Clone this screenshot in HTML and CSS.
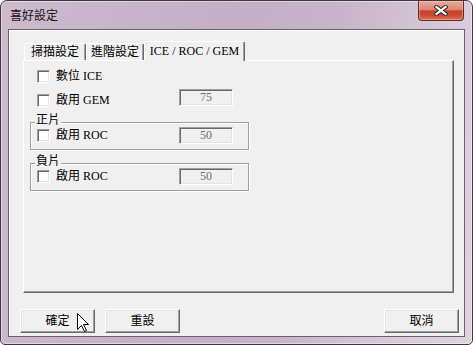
FILE: index.html
```html
<!DOCTYPE html>
<html>
<head>
<meta charset="utf-8">
<link rel="stylesheet" href="styles.css">
</head>
<body>
<div class="window">
  <div class="titlebar">
    <span class="title">喜好設定</span>
    <div class="close">
      <svg width="14" height="11" viewBox="0 0 14 11">
        <path d="M2.5 2 L11.5 9 M11.5 2 L2.5 9" stroke="#3b2a2a" stroke-width="4.2" stroke-linecap="square" fill="none"/>
        <path d="M2.5 2 L11.5 9 M11.5 2 L2.5 9" stroke="#fff" stroke-width="2.2" stroke-linecap="square" fill="none"/>
      </svg>
    </div>
  </div>
  <div class="client">
    <div class="tabctl">
      <div class="tabs">
        <div class="tab t1">掃描設定</div>
        <div class="tab t2">進階設定</div>
        <div class="tab t3 active">ICE / ROC / GEM</div>
      </div>
      <div class="panel">
        <div class="row r1">
          <label class="check"><span class="box"></span><span class="lbl">數位 ICE</span></label>
        </div>
        <div class="row r2">
          <label class="check"><span class="box"></span><span class="lbl">啟用 GEM</span></label>
          <div class="field">75</div>
        </div>
        <div class="group g1">
          <span class="legend">正片</span>
          <div class="row gr">
            <label class="check"><span class="box"></span><span class="lbl">啟用 ROC</span></label>
            <div class="field">50</div>
          </div>
        </div>
        <div class="group g2">
          <span class="legend">負片</span>
          <div class="row gr">
            <label class="check"><span class="box"></span><span class="lbl">啟用 ROC</span></label>
            <div class="field">50</div>
          </div>
        </div>
      </div>
    </div>
    <div class="buttons">
      <button class="btn">確定</button>
      <button class="btn">重設</button>
      <button class="btn cancel">取消</button>
    </div>
  </div>
  <svg class="cursor" width="13" height="20" viewBox="0 0 13 20">
    <path d="M0.5 0.5 V16.5 L4.5 12.5 L7.5 18.5 L9.5 17.5 L6.5 11.5 H11.5 Z" fill="#fff" stroke="#000" stroke-width="1" stroke-linejoin="miter"/>
  </svg>
</div>
</body>
</html>
```

FILE: styles.css
```css
body {
  margin: 0;
  background: #fff;
  font-family: "Liberation Serif", "Noto Sans CJK TC", serif;
  font-size: 12px;
  color: #000;
}

.window {
  position: relative;
  width: 473px;
  height: 345px;
  box-sizing: border-box;
  border: 1px solid #3d383e;
  border-radius: 7px 7px 5px 5px;
  background: linear-gradient(100deg, #cdbacd 0%, #c4afc6 45%, #c8b5ca 65%, #d8cad9 85%, #dfd3df 100%);
  box-shadow: inset 0 0 0 1px rgba(255, 255, 255, 0.45);
  display: flex;
  flex-direction: column;
  overflow: hidden;
}

.titlebar {
  height: 28px;
  display: flex;
  align-items: center;
  padding-left: 9px;
}

.title {
  font-family: "Noto Sans CJK TC", sans-serif;
  font-size: 12px;
  line-height: 14px;
  color: #151515;
}

.close {
  align-self: flex-start;
  margin-left: auto;
  margin-right: 8px;
  width: 46px;
  height: 20px;
  box-sizing: border-box;
  border: 1px solid #6a2a22;
  border-top: none;
  border-radius: 0 0 4px 4px;
  background: linear-gradient(#e9aa9b 0%, #dd8673 45%, #c5432c 52%, #c84a31 75%, #dd7458 100%);
  box-shadow: inset 0 0 0 1px rgba(255, 220, 210, 0.35);
  display: flex;
  align-items: center;
  justify-content: center;
}

.client {
  flex: 1;
  margin: 0 7px 7px;
  border: 1px solid #6a6070;
  background: #f0f0f0;
  box-shadow: inset 1px 1px 0 #fff;
  display: flex;
  flex-direction: column;
}

.tabctl {
  margin: 11px 0 0 14px;
  width: 431px;
}

.tabs {
  display: flex;
  align-items: flex-end;
  height: 19px;
  padding-left: 1px;
}

.tab {
  box-sizing: border-box;
  height: 17px;
  border-top: 1px solid #fff;
  border-left: 1px solid #fff;
  border-right: 1px solid #696969;
  border-radius: 2px 2px 0 0;
  box-shadow: inset -1px 0 0 #a0a0a0;
  background: #f0f0f0;
  display: flex;
  align-items: center;
  justify-content: center;
  line-height: 14px;
  white-space: nowrap;
}

.t1 { width: 62px; }
.t2 { width: 58px; }
.t3 { width: 101px; }

.tab.active {
  height: 20px;
  margin-bottom: -1px;
  position: relative;
  z-index: 1;
  padding-bottom: 1px;
}

.panel {
  box-sizing: border-box;
  height: 233px;
  border: 1px solid;
  border-color: #fff #696969 #696969 #fff;
  box-shadow: inset -1px -1px 0 #a0a0a0;
  padding-top: 8px;
}

.row {
  display: flex;
  align-items: center;
}

.r1 {
  height: 14px;
  padding-left: 13px;
}

.r2 {
  margin-top: 5px;
  height: 19px;
  padding-left: 13px;
  align-items: flex-start;
}

.r2 .check { margin-top: 6px; }
.r2 .field { margin-top: 1px; }

.check {
  display: flex;
  align-items: center;
  gap: 6px;
  width: 142px;
  height: 13px;
}

.box {
  width: 13px;
  height: 13px;
  box-sizing: border-box;
  border: 1px solid;
  border-color: #a0a0a0 #fff #fff #a0a0a0;
  background: #fff;
  box-shadow: inset 1px 1px 0 #696969, inset -1px -1px 0 #e3e3e3;
  flex: none;
}

.lbl {
  line-height: 13px;
  white-space: nowrap;
}

.field {
  width: 54px;
  height: 17px;
  box-sizing: border-box;
  border: 1px solid;
  border-color: #a0a0a0 #fff #fff #a0a0a0;
  box-shadow: inset 1px 1px 0 #696969, inset -1px -1px 0 #e3e3e3;
  background: #f0f0f0;
  color: #6d6d6d;
  text-align: center;
  line-height: 15px;
}

.group {
  position: relative;
  margin: 15px 0 0 6px;
  width: 219px;
  box-sizing: border-box;
  border: 1px solid #a0a0a0;
  box-shadow: inset 1px 1px 0 #fff, 1px 1px 0 #fff;
  padding: 4px 0 5px 6px;
}

.g2 { margin-top: 13px; }

.gr { height: 17px; }

.legend {
  position: absolute;
  top: -10px;
  left: 4px;
  padding: 0 1px;
  background: #f0f0f0;
  line-height: 14px;
}

.buttons {
  display: flex;
  gap: 10px;
  margin: 16px 5px 0 11px;
}

.btn {
  width: 75px;
  height: 24px;
  box-sizing: border-box;
  padding: 0;
  border: 1px solid;
  border-color: #fff #696969 #696969 #fff;
  box-shadow: inset -1px -1px 0 #a0a0a0, inset 1px 1px 0 #e3e3e3;
  background: #f0f0f0;
  font-family: inherit;
  font-size: 12px;
  color: #000;
  line-height: 14px;
}

.cancel { margin-left: auto; }

.cursor {
  position: absolute;
  left: 76px;
  top: 312px;
}
```
